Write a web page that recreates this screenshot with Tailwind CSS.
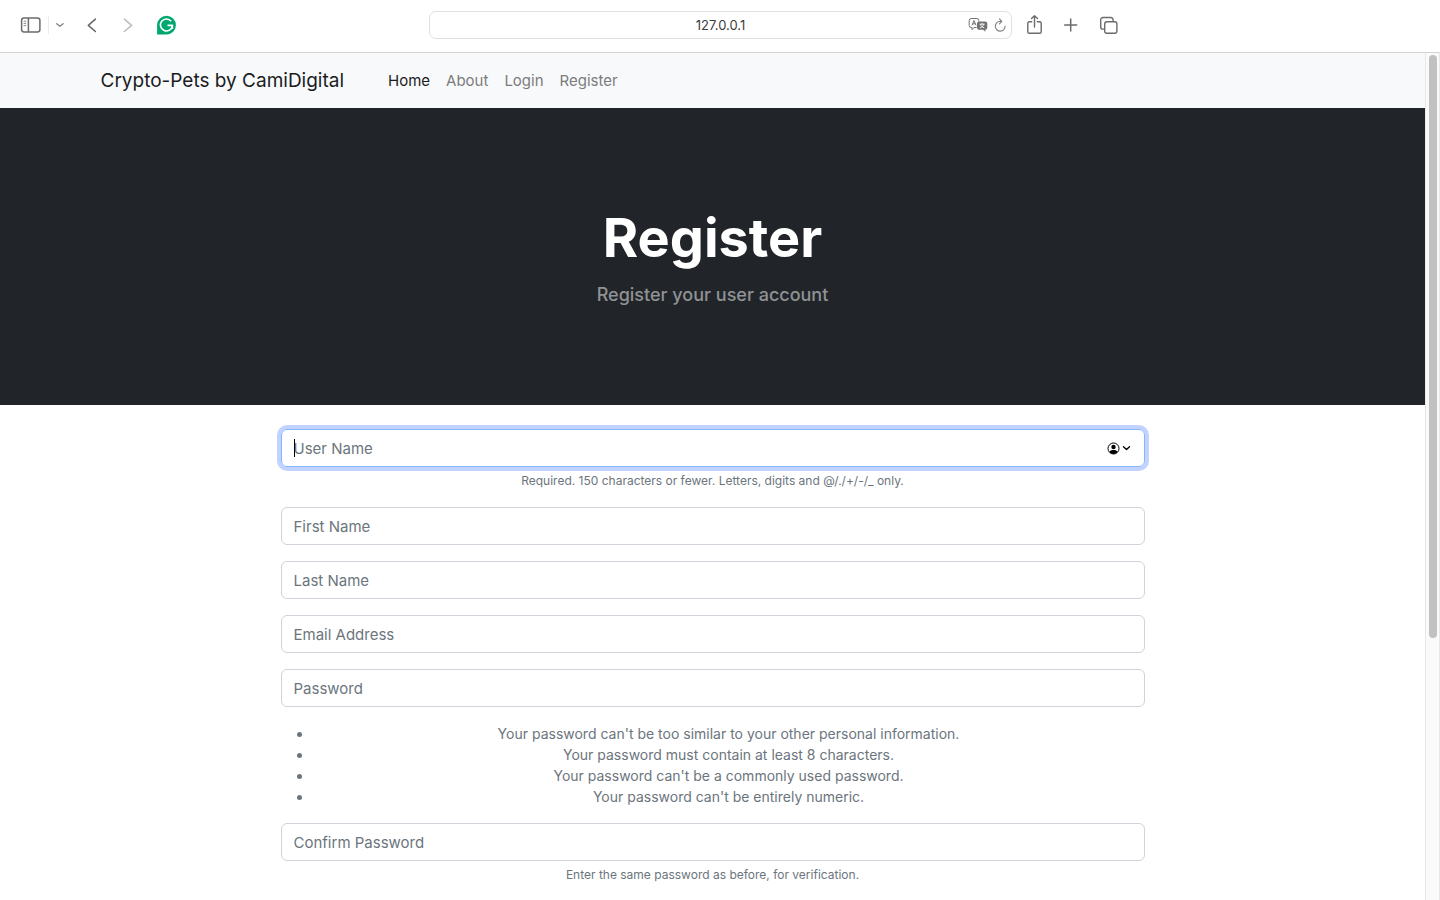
<!DOCTYPE html>
<html lang="en">
<head>
<meta charset="utf-8">
<meta name="viewport" content="width=device-width, initial-scale=1">
<title>Register - Crypto-Pets by CamiDigital</title>
<script src="https://cdn.jsdelivr.net/npm/@tailwindcss/browser@4"></script>
</head>
<body class="flex h-screen flex-col overflow-hidden bg-white font-['Inter','Liberation_Sans',sans-serif] text-[#212529]">

<!-- Browser toolbar -->
<header class="grid shrink-0 grid-cols-[429px_minmax(0,583px)_1fr] items-center border-b border-[#d4d4d4] pt-[11px] pb-[13px] text-[#6b6b6b]">
  <div class="flex items-center pl-5">
    <button aria-label="Sidebar" class="flex">
      <svg width="22" height="18" viewBox="0 0 22 18" fill="none" stroke="currentColor" stroke-width="1.5"><rect x="1.6" y="1.9" width="18.3" height="14" rx="2.4"/><path d="M8.4 2v14"/><path d="M3.6 5.2h2.6M3.6 7.4h2.6M3.6 9.6h2.6" stroke-width="1" stroke="#8a8a8a"/></svg>
    </button>
    <span class="ml-1.5 h-[18px] w-px bg-[#ececec]"></span>
    <button aria-label="Tab groups" class="ml-1.5 flex">
      <svg width="10" height="8" viewBox="0 0 10 8" fill="none" stroke="#858585" stroke-width="1.4" stroke-linecap="round" stroke-linejoin="round"><path d="M1.7 2.7 4.9 5.3 8.1 2.7"/></svg>
    </button>
    <button aria-label="Back" class="ml-5 flex">
      <svg width="16" height="18" viewBox="0 0 16 18" fill="none" stroke="currentColor" stroke-width="1.6" stroke-linecap="round" stroke-linejoin="round"><path d="M10.400 3.200 3.300 9.300l7.100 6.200"/></svg>
    </button>
    <button aria-label="Forward" class="ml-5 flex text-[#bdbdbd]">
      <svg width="16" height="18" viewBox="0 0 16 18" fill="none" stroke="currentColor" stroke-width="1.6" stroke-linecap="round" stroke-linejoin="round"><path d="M3.400 3.200 10.600 9.300l-7.200 6.200"/></svg>
    </button>
    <button aria-label="Grammarly" class="ml-5 flex">
      <svg width="20" height="20" viewBox="0 0 20 20"><path d="M9.500.8A9.400 9.400 0 0 0 .1 10.200v9.400h9.400A9.400 9.400 0 0 0 9.500.8Z" fill="#00a870"/><path d="M14.200 6.300A6 6 0 1 0 15.400 10.700M10.500 10.400h4.900v3.500" fill="none" stroke="#fff" stroke-width="1.600"/></svg>
    </button>
  </div>
  <div class="relative">
    <input type="text" aria-label="Address" value="127.0.0.1" class="h-7 w-full rounded-[7px] border border-[#e0e0e0] bg-white text-center text-[13px] text-[#3d3d3d] outline-none">
    <div class="absolute inset-y-0 right-1 flex items-center gap-1.5">
      <button aria-label="Translate" class="flex">
        <svg width="20" height="16" viewBox="0 0 20 16" fill="none" stroke="#737373" stroke-width="1"><path d="M8.500 10.500H6L4 12.700v-2.200H3.200a2 2 0 0 1-2-2V3.500a2 2 0 0 1 2-2h5.600a2 2 0 0 1 2 2v1"/><path d="M4 8.300 6 3.500 8 8.300M4.600 6.800h2.800"/><path d="M11 4.600h6.300a2 2 0 0 1 2 2v4.200a2 2 0 0 1-2 2v2l-2.200-2H11a2 2 0 0 1-2-2V6.600a2 2 0 0 1 2-2Z" fill="#737373" stroke="none"/><path d="M11.600 7.200h5M14.100 6v1.200M12.500 7.400c.5 1.700 2 2.900 3.700 3.400M15.700 7.400c-.5 1.700-2 2.900-3.700 3.400" stroke="#fff" stroke-width=".9"/></svg>
      </button>
      <button aria-label="Reload" class="flex">
        <svg width="14" height="16" viewBox="0 0 14 16" fill="none" stroke="#808080" stroke-width="1.100" stroke-linecap="round" stroke-linejoin="round"><path d="M11.100 9A4.900 4.900 0 1 1 6.200 4.300l1 .1"/><path d="M5.400 1.800 7.800 4.300 5.400 6.800"/></svg>
      </button>
    </div>
  </div>
  <div class="flex items-center pl-3.5">
    <button aria-label="Share" class="flex">
      <svg width="18" height="22" viewBox="0 0 18 22" fill="none" stroke="currentColor" stroke-width="1.400" stroke-linecap="round" stroke-linejoin="round"><path d="M5.700 7.800H3.400a1.600 1.600 0 0 0-1.600 1.600V17.700a1.600 1.600 0 0 0 1.600 1.600h10.200a1.600 1.600 0 0 0 1.600-1.600V9.400a1.600 1.600 0 0 0-1.600-1.600h-2.300"/><path d="M8.500 13V1.900M5.500 4.600l3-2.900 3 2.900"/></svg>
    </button>
    <button aria-label="New tab" class="ml-5 flex">
      <svg width="14" height="14" viewBox="0 0 14 14" fill="none" stroke="currentColor" stroke-width="1.500" stroke-linecap="round"><path d="M6.700 1.100v12M.700 7.100h12"/></svg>
    </button>
    <button aria-label="Tabs" class="ml-5 flex">
      <svg width="22" height="20" viewBox="0 0 22 20" fill="none" stroke="currentColor" stroke-width="1.400" stroke-linejoin="round"><rect x="6.700" y="6.700" width="12.200" height="11.500" rx="2.200"/><path d="M6.500 14.100H4.900a2.200 2.200 0 0 1-2.200-2.200V4.700A2.200 2.200 0 0 1 4.900 2.500h8a2.200 2.200 0 0 1 2.200 2.200v1.900"/></svg>
    </button>
  </div>
</header>

<div class="flex min-h-0 flex-1">
  <div class="min-w-0 flex-1 overflow-hidden">
    <nav class="bg-[#f8f9fa]">
      <div class="mx-auto flex max-w-[1320px] items-center px-12 py-3">
        <a href="#" class="text-[19px] leading-[31px] text-[#1a1c1e]">Crypto-Pets by CamiDigital</a>
        <ul class="ml-11 flex gap-4 text-[15px] leading-6 text-[#7b7c7d]">
          <li><a href="#" class="text-[#1a1c1e]">Home</a></li>
          <li><a href="#">About</a></li>
          <li><a href="#">Login</a></li>
          <li><a href="#">Register</a></li>
        </ul>
      </div>
    </nav>

    <section class="bg-[#212529] py-24 text-center">
      <h1 class="text-[54px] leading-[68px] font-bold text-white">Register</h1>
      <p class="mt-2 text-lg leading-[29px] font-medium text-[#909294]">Register your user account</p>
    </section>

    <main class="mx-auto max-w-[864px] pt-6 text-center text-[#6c757d]">
      <form>
        <div class="mb-4">
          <div class="relative">
            <input type="text" aria-label="User Name" placeholder="User Name" class="block h-[38px] w-full rounded-md border border-[#86b7fe] px-3 text-[15px] ring-4 ring-[#c2d3fe] outline-none placeholder:text-[#6c757d]">
            <span class="absolute top-2.5 left-[13px] h-[18px] w-px bg-black"></span>
            <button type="button" aria-label="Autofill user" class="absolute inset-y-0 right-3.5 flex items-center gap-0.5 text-black">
              <svg width="13" height="13" viewBox="0 0 13 13"><circle cx="6.500" cy="6.500" r="5.500" fill="none" stroke="currentColor" stroke-width="1"/><circle cx="6.500" cy="5" r="2.200" fill="currentColor"/><path d="M2.300 10c.6-1.500 2.200-2.100 4.200-2.100s3.600.6 4.200 2.100a5.500 5.500 0 0 1-8.400 0Z" fill="currentColor"/></svg>
              <svg width="9" height="8" viewBox="0 0 9 8" fill="none" stroke="currentColor" stroke-width="1.400" stroke-linecap="round" stroke-linejoin="round"><path d="M1.500 2.700 4.500 5.500 7.500 2.700"/></svg>
            </button>
          </div>
          <p class="mt-1 text-xs leading-5">Required. 150 characters or fewer. Letters, digits and @/./+/-/_ only.</p>
        </div>
        <div class="flex flex-col gap-4">
          <input type="text" aria-label="First Name" placeholder="First Name" class="h-[38px] w-full rounded-md border border-[#ced4da] px-3 text-[15px] placeholder:text-[#6c757d]">
          <input type="text" aria-label="Last Name" placeholder="Last Name" class="h-[38px] w-full rounded-md border border-[#ced4da] px-3 text-[15px] placeholder:text-[#6c757d]">
          <input type="email" aria-label="Email Address" placeholder="Email Address" class="h-[38px] w-full rounded-md border border-[#ced4da] px-3 text-[15px] placeholder:text-[#6c757d]">
          <input type="password" aria-label="Password" placeholder="Password" class="h-[38px] w-full rounded-md border border-[#ced4da] px-3 text-[15px] placeholder:text-[#6c757d]">
          <ul class="list-disc pl-8 text-sm leading-[21px]">
            <li>Your password can't be too similar to your other personal information.</li>
            <li>Your password must contain at least 8 characters.</li>
            <li>Your password can't be a commonly used password.</li>
            <li>Your password can't be entirely numeric.</li>
          </ul>
          <div>
            <input type="password" aria-label="Confirm Password" placeholder="Confirm Password" class="block h-[38px] w-full rounded-md border border-[#ced4da] px-3 text-[15px] placeholder:text-[#6c757d]">
            <p class="mt-1 text-xs leading-5">Enter the same password as before, for verification.</p>
          </div>
        </div>
      </form>
    </main>
  </div>

  <!-- Scrollbar -->
  <div class="w-[15px] shrink-0 border-x border-[#e8e8e8] bg-[#fafafa] px-[3px] pt-0.5" aria-hidden="true">
    <div class="h-[69%] w-2 rounded-full bg-[#c1c1c1]"></div>
  </div>
</div>
</body>
</html>
